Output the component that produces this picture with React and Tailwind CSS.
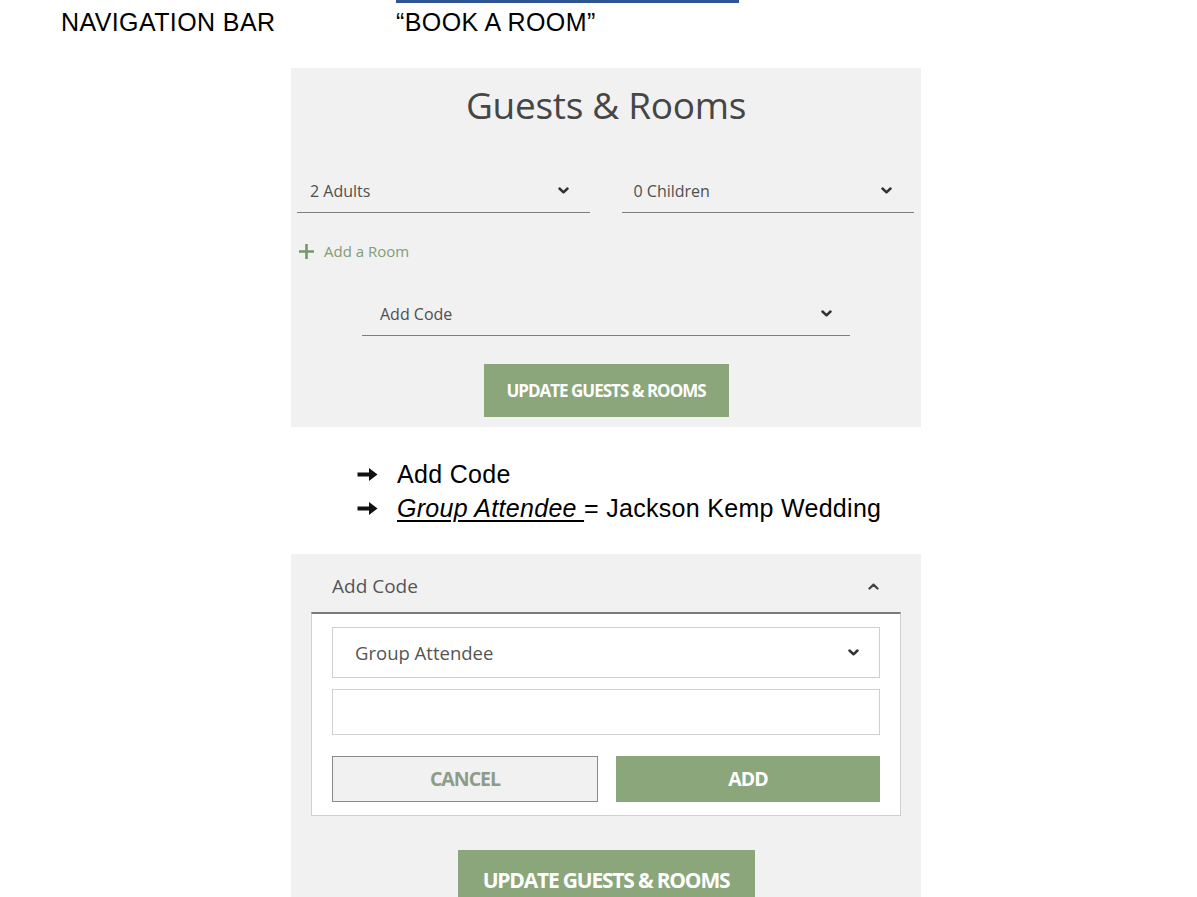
import React from 'react';

const ui = { fontFamily: '"Open Sans", "Noto Sans", sans-serif' };
const doc = { fontFamily: '"Liberation Sans", Arial, sans-serif' };

function ChevronDown({ className = '' }) {
  return (
    <svg className={className} width="11" height="7" viewBox="0 0 11 7" fill="none">
      <polyline points="1.5,1.5 5.5,5.3 9.5,1.5" stroke="#333" strokeWidth="2.5" strokeLinecap="round" strokeLinejoin="round" />
    </svg>
  );
}

function ChevronUp({ className = '' }) {
  return (
    <svg className={className} width="11" height="7" viewBox="0 0 11 7" fill="none">
      <polyline points="1.5,5.5 5.5,1.7 9.5,5.5" stroke="#444" strokeWidth="2.3" strokeLinecap="round" strokeLinejoin="round" />
    </svg>
  );
}

function LineSelect({ label, className = '' }) {
  return (
    <div className={`flex items-center justify-between h-[44px] border-b border-[#7d7d7d] ${className}`}>
      <span className="text-[16px] text-[#4f4f4f]">{label}</span>
      <ChevronDown />
    </div>
  );
}

function Arrow() {
  return (
    <svg width="21" height="15" viewBox="0 0 21 15">
      <path d="M0.5 5.6h11.5V1l8.5 6.5-8.5 6.5V9.4H0.5z" fill="#111" />
    </svg>
  );
}

export default function App() {
  return (
    <div className="min-h-screen bg-white pb-10">
      {/* heading row */}
      <div className="flex pl-[61px]" style={doc}>
        <div className="w-[335px] pt-[8px] text-[25px] leading-[28px] tracking-[0.4px] text-black">NAVIGATION BAR</div>
        <div>
          <div className="h-[3px] w-[343px] bg-[#2f5496]" />
          <div className="mt-[5px] text-[25px] leading-[28px] tracking-[0.4px] text-black">“BOOK A ROOM”</div>
        </div>
      </div>

      {/* first mock */}
      <div className="ml-[291px] mt-[32px] w-[630px] h-[359px] bg-[#f1f1f1] pt-[13px]" style={ui}>
        <h2 className="text-center text-[37px] leading-[48px] text-[#464646] tracking-[-0.3px]">Guests &amp; Rooms</h2>
        <div className="mt-[40px] flex gap-[32px] pl-[6px] pr-[7px]">
          <LineSelect label="2 Adults" className="flex-1 pl-[13px] pr-[21px]" />
          <LineSelect label="0 Children" className="flex-1 pl-[12px] pr-[22px]" />
        </div>
        <div className="mt-[27px] h-[22px] flex items-center pl-[7px] gap-[9px]">
          <svg width="17" height="17" viewBox="0 0 17 17">
            <path d="M8.5 1v15M1 8.5h15" stroke="#74986a" strokeWidth="2.6" />
          </svg>
          <span className="text-[15px] text-[#819c78]">Add a Room</span>
        </div>
        <div className="mt-[30px] mx-auto w-[488px]">
          <LineSelect label="Add Code" className="pl-[18px] pr-[18px]" />
        </div>
        <button className="mt-[28px] mx-auto flex items-center justify-center w-[245px] h-[53px] bg-[#8ba67a] text-white text-[17px] font-bold tracking-[-1px]">
          UPDATE GUESTS &amp; ROOMS
        </button>
      </div>

      {/* notes */}
      <div className="mt-[30px] pl-[357px] text-[25px] leading-[34px] tracking-[0.3px] text-black" style={doc}>
        <div className="flex items-center">
          <span className="w-[40px] flex"><Arrow /></span>
          <span>Add Code</span>
        </div>
        <div className="flex items-center">
          <span className="w-[40px] flex"><Arrow /></span>
          <span><span className="italic underline underline-offset-[3px]">Group Attendee </span> = Jackson Kemp Wedding</span>
        </div>
      </div>

      {/* second mock */}
      <div className="ml-[291px] mt-[29px] w-[630px] bg-[#f1f1f1] pb-[20px]" style={ui}>
        <div className="h-[58px] flex items-center justify-between pl-[41px] pr-[42px] pt-[6px]">
          <span className="text-[19px] text-[#555]">Add Code</span>
          <ChevronUp />
        </div>
        <div className="mx-[20px] bg-white border-t-2 border-t-[#7a7a7a] border-x border-b border-x-[#cfcfcf] border-b-[#cfcfcf] px-[20px] pt-[13px] pb-[13px]">
          <div className="h-[51px] border border-[#cfcfcf] flex items-center justify-between pl-[22px] pr-[20px]">
            <span className="text-[18.5px] text-[#555]">Group Attendee</span>
            <ChevronDown />
          </div>
          <div className="mt-[11px] h-[46px] border border-[#cfcfcf]" />
          <div className="mt-[21px] flex gap-[18px]">
            <button className="flex-1 h-[46px] bg-[#f1f1f1] border border-[#8a8a8a] text-[#8d9c88] text-[19.5px] font-bold tracking-[-1px]">CANCEL</button>
            <button className="flex-1 h-[46px] bg-[#8ba67a] text-white text-[19.5px] font-bold tracking-[-1px]">ADD</button>
          </div>
        </div>
        <button className="mt-[34px] mx-auto flex items-center justify-center w-[297px] h-[62px] bg-[#8ba67a] text-white text-[21px] font-bold tracking-[-1.2px]">
          UPDATE GUESTS &amp; ROOMS
        </button>
      </div>
    </div>
  );
}
